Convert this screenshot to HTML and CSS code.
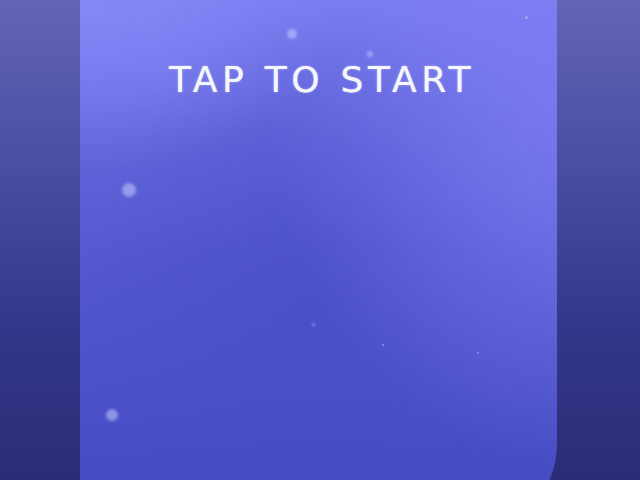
FILE: index.html
```html
<!DOCTYPE html>
<html lang="en">
<head>
  <meta charset="UTF-8" />
  <meta name="viewport" content="width=device-width, initial-scale=1.0" />
  <title>Tap to start</title>
  <link rel="stylesheet" href="styles.css">
</head>
<body>
  <main class="stage">
    <section class="panel">
      <h1 class="start-title">TAP TO START</h1>
      <span class="spark s1"></span>
      <span class="spark s2"></span>
      <span class="spark s3"></span>
      <span class="spark s4"></span>
      <span class="spark s5"></span>
      <span class="spark s6"></span>
      <span class="spark s7"></span>
      <span class="spark s8"></span>
    </section>
  </main>
</body>
</html>
```

FILE: styles.css
```css
:root {
  --bg-top: #6364b6;
  --bg-bottom: #2a2c76;
  --text: #f6f6ff;
}

html, body {
  margin: 0;
  height: 480px;
  overflow: hidden;
}

body {
  font-family: 'DejaVu Sans', 'Noto Sans', sans-serif;
  background: linear-gradient(180deg, var(--bg-top) 0%, #4a4da0 35%, #35388b 65%, var(--bg-bottom) 100%);
}

.stage {
  display: flex;
  justify-content: center;
  height: 480px;
  overflow: hidden;
}

.panel {
  position: relative;
  flex: none;
  width: 477px;
  height: 534px;
  margin-right: 3px;
  border-bottom-right-radius: 90px;
  background:
    radial-gradient(ellipse 300px 360px at 490px 110px, rgba(128, 128, 246, 0.7), rgba(128, 128, 246, 0) 100%),
    radial-gradient(ellipse 260px 170px at 10px 0px, rgba(134, 138, 250, 0.8), rgba(134, 138, 250, 0) 100%),
    radial-gradient(ellipse 240px 300px at 240px 300px, rgba(68, 74, 194, 0.5), rgba(68, 74, 194, 0) 100%),
    linear-gradient(180deg, #787cee 0%, #6266db 25%, #5459d0 48%, #4b51c8 72%, #4148bf 100%);
  overflow: hidden;
}

.start-title {
  margin: 58px 0 0;
  text-align: center;
  color: var(--text);
  font-size: 36px;
  font-weight: 400;
  letter-spacing: 4.7px;
  line-height: 44px;
  text-indent: 7px;
  text-shadow: 0 0 1px rgba(255, 255, 255, 0.6), 0 0 3px rgba(255, 255, 255, 0.25);
}

.spark {
  position: absolute;
  border-radius: 50%;
  background: rgba(200, 205, 255, 0.55);
  filter: blur(1.5px);
}

.s1 { left: 207px; top: 29px; width: 10px; height: 10px; }
.s2 { left: 287px; top: 51px; width: 6px; height: 6px; }
.s3 { left: 42px; top: 183px; width: 14px; height: 14px; }
.s4 { left: 26px; top: 409px; width: 12px; height: 12px; }
.s5 { left: 445px; top: 16px; width: 3px; height: 3px; filter: none; }
.s6 { left: 232px; top: 323px; width: 3px; height: 3px; filter: blur(1px); }
.s7 { left: 302px; top: 344px; width: 2px; height: 2px; filter: none; }
.s8 { left: 397px; top: 352px; width: 2px; height: 2px; filter: none; }
```
